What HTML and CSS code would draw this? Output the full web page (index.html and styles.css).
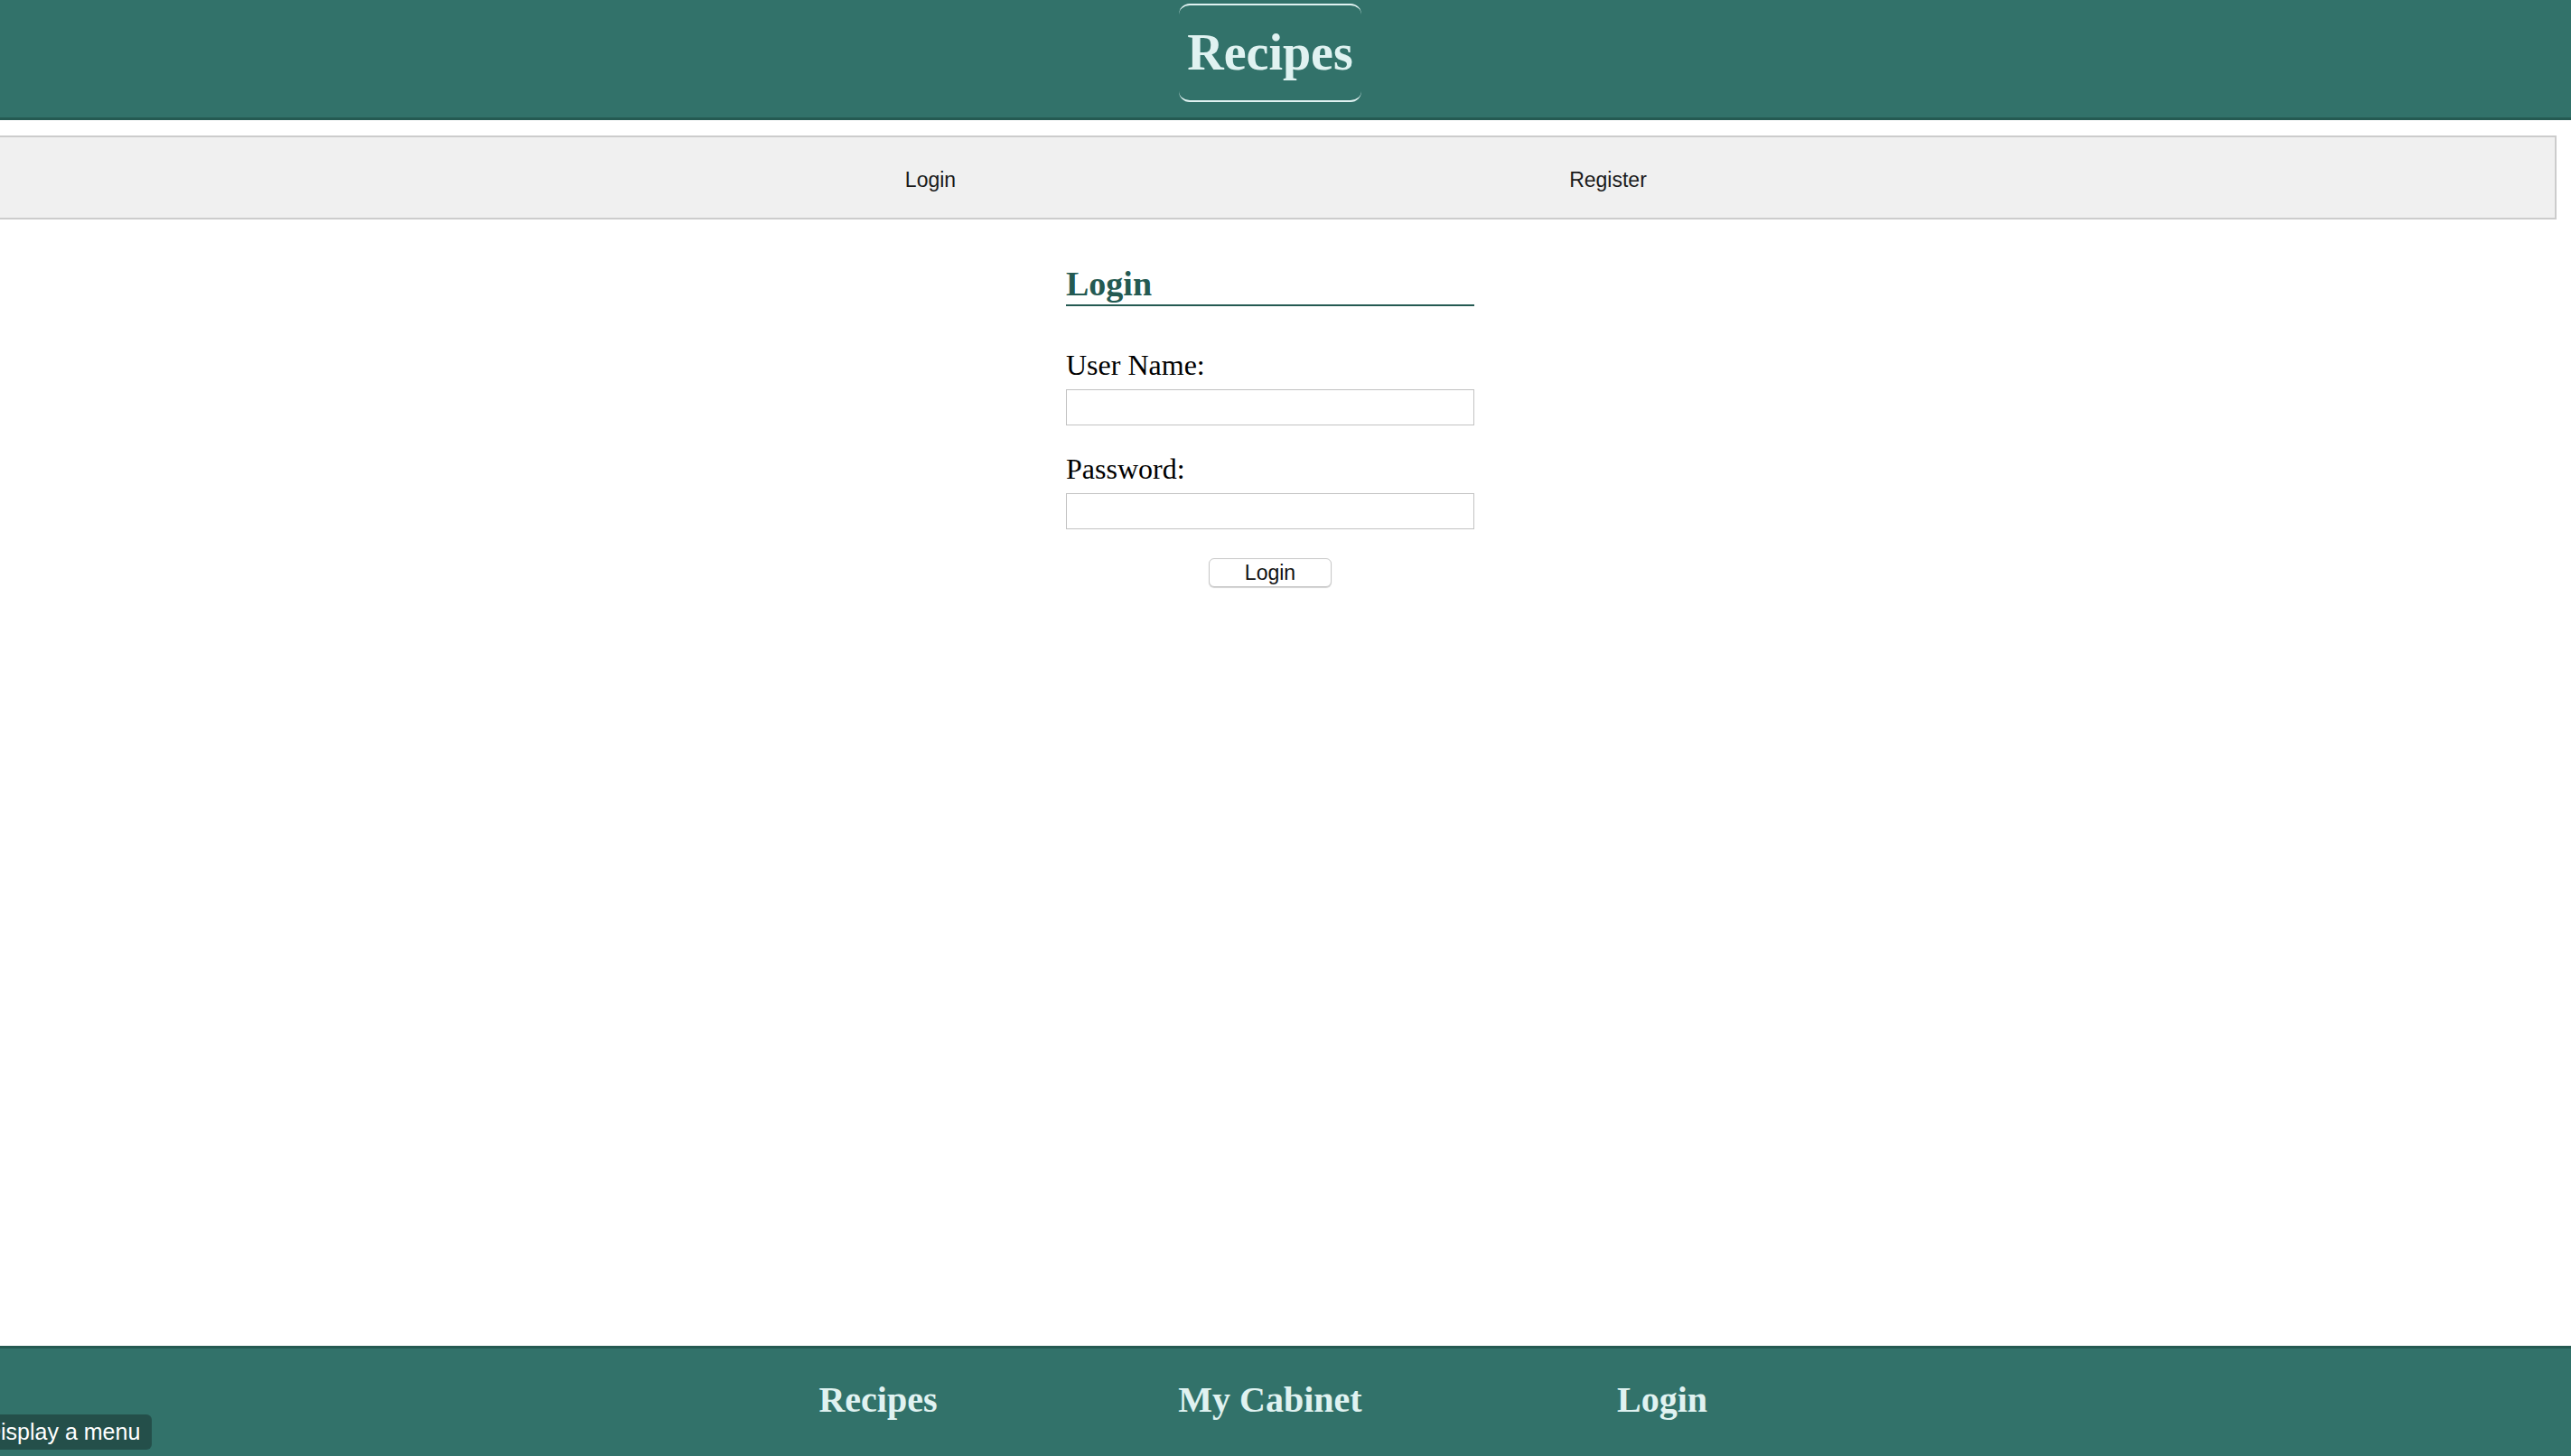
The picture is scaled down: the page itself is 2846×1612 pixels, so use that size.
FILE: index.html
```html
<!DOCTYPE html>
<html lang="en">
<head>
<meta charset="utf-8">
<title>Recipes - Login</title>
<link rel="stylesheet" href="styles.css">
</head>
<body>
<header class="site-header">
  <h1 class="site-title">Recipes</h1>
</header>
<nav class="top-nav">
  <ul class="top-nav-list">
    <li><a href="#">Login</a></li>
    <li><a href="#">Register</a></li>
  </ul>
</nav>
<main class="main">
  <form class="login-form">
    <h2 class="form-title">Login</h2>
    <label class="field-label" for="username">User Name:</label>
    <input class="field-input" id="username" type="text">
    <label class="field-label" for="password">Password:</label>
    <input class="field-input" id="password" type="password">
    <div class="actions">
      <button class="btn" type="button">Login</button>
    </div>
  </form>
</main>
<footer class="site-footer">
  <ul class="footer-list">
    <li><a href="#">Recipes</a></li>
    <li><a href="#">My Cabinet</a></li>
    <li><a href="#">Login</a></li>
  </ul>
</footer>
<div class="tooltip">Display a menu</div>
</body>
</html>
```
FILE: styles.css
```css
html, body {
  margin: 0;
  padding: 0;
}
body {
  min-height: 100vh;
  display: flex;
  flex-direction: column;
  background: #ffffff;
  font-family: "Liberation Serif", "Times New Roman", serif;
  overflow: hidden;
}
a {
  color: inherit;
  text-decoration: none;
}
ul {
  list-style: none;
  margin: 0;
  padding: 0;
}

.site-header {
  background: #32726a;
  height: 130px;
  border-bottom: 3px solid #255a52;
  display: flex;
  justify-content: center;
  align-items: flex-start;
  padding-right: 34px;
}
.site-title {
  margin: 4px 0 0;
  padding: 20px 9px 21px;
  font-size: 56px;
  line-height: 64px;
  font-weight: bold;
  color: #e0f2f1;
  border-top: 2px solid #e0f2f1;
  border-bottom: 2px solid #e0f2f1;
  border-left: 0;
  border-right: 0;
  border-radius: 12px;
}

.top-nav {
  margin: 17px 16px 0 -2px;
  background: #f0f0f0;
  border: 2px solid #cccccc;
  height: 89px;
  display: flex;
  align-items: center;
}
.top-nav-list {
  flex: 1;
  display: grid;
  grid-template-columns: 750px 750px;
  justify-content: center;
  padding-right: 18px;
  font-family: "Liberation Sans", Arial, sans-serif;
  font-size: 23px;
  color: #1a1a1a;
  text-align: center;
  padding-top: 5px;
}

.main {
  flex: 1;
  display: flex;
  justify-content: center;
  padding-right: 34px;
}
.login-form {
  width: 452px;
  display: flex;
  flex-direction: column;
}
.form-title {
  margin: 49px 0 0;
  padding: 0 0 1px;
  font-size: 38px;
  line-height: 44px;
  font-weight: bold;
  color: #245a52;
  border-bottom: 2px solid #245a52;
}
.field-label {
  font-size: 32px;
  line-height: 37px;
  color: #000;
  margin-bottom: 8px;
}
.form-title + .field-label {
  margin-top: 47px;
}
.field-input {
  box-sizing: border-box;
  width: 452px;
  height: 40px;
  margin: 0 0 30px;
  border: 1px solid #c2c2c2;
  background: #fff;
  font-size: 20px;
  padding: 4px 8px;
}
.actions {
  display: flex;
  justify-content: center;
  margin-top: 2px;
}
.btn {
  width: 136px;
  height: 32px;
  box-sizing: border-box;
  border: 1px solid #c8c8c8;
  border-radius: 6px;
  background: #ffffff;
  box-shadow: 0 1px 1px rgba(0, 0, 0, 0.18);
  font-family: "Liberation Sans", Arial, sans-serif;
  font-size: 23px;
  line-height: 28px;
  color: #111;
  padding: 0;
}

.site-footer {
  background: #32726a;
  border-top: 3px solid #255a52;
  height: 119px;
  padding-right: 34px;
}
.footer-list {
  display: grid;
  grid-template-columns: 434px 434px 434px;
  justify-content: center;
  text-align: center;
  padding-top: 34px;
  font-size: 40px;
  line-height: 45px;
  font-weight: bold;
  color: #e0f2f1;
}

.tooltip {
  position: fixed;
  left: -25px;
  top: 1566px;
  height: 39px;
  box-sizing: border-box;
  padding: 0 13px 0 8px;
  background: #244f4a;
  border-radius: 6px;
  color: #ffffff;
  font-family: "Liberation Sans", Arial, sans-serif;
  font-size: 25px;
  line-height: 39px;
  white-space: nowrap;
}
```
